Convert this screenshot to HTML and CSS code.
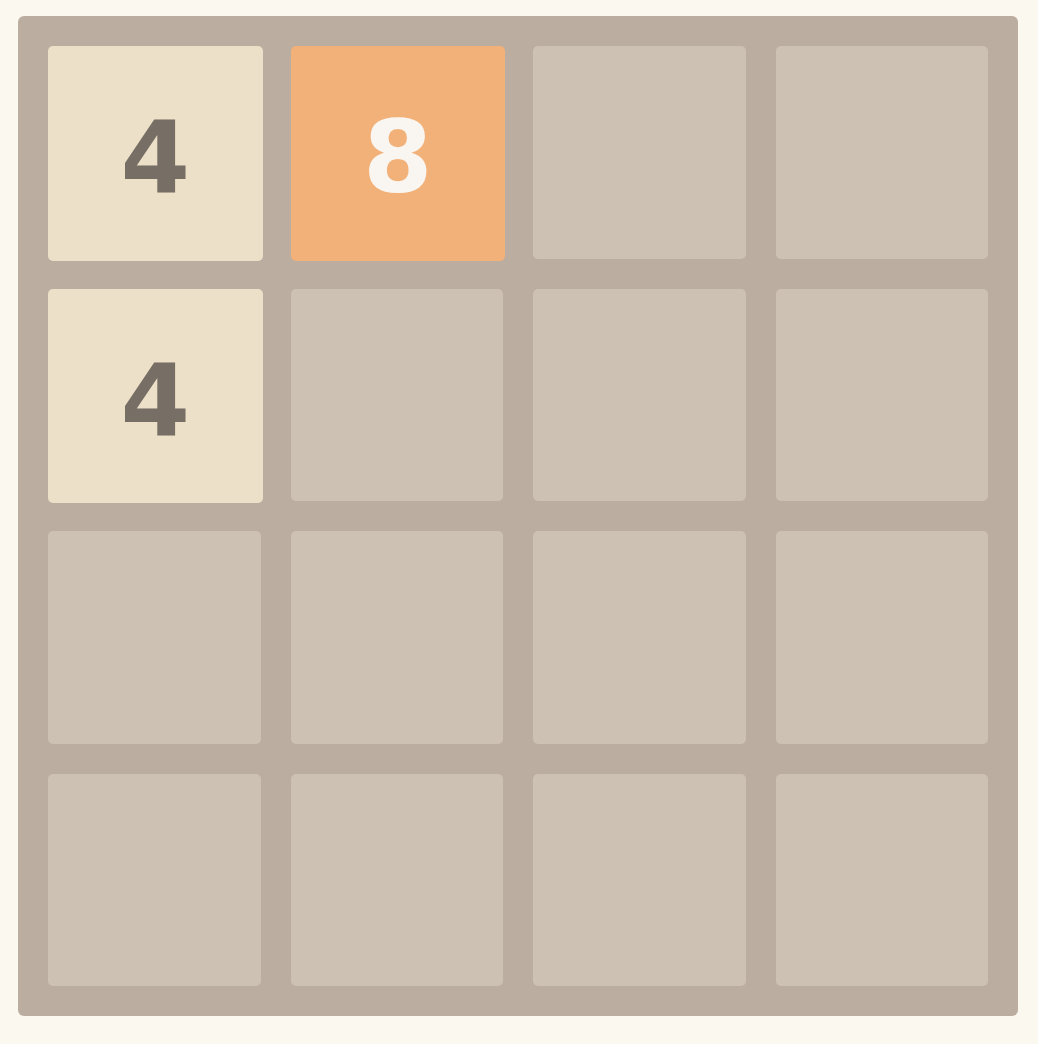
FILE: index.html
```html
<!DOCTYPE html>
<html lang="en">

<head>
    <meta charset="UTF-8">
    <meta name="viewport" content="width=device-width, initial-scale=1.0">
    <title>2048</title>
    <link rel="stylesheet" href="styles.css">
</head>

<body>
    <div class="game-container">
        <div class="grid">
            <div class="cell tile tile-4">4</div>
            <div class="cell tile tile-8">8</div>
            <div class="cell"></div>
            <div class="cell"></div>

            <div class="cell tile tile-4">4</div>
            <div class="cell"></div>
            <div class="cell"></div>
            <div class="cell"></div>

            <div class="cell"></div>
            <div class="cell"></div>
            <div class="cell"></div>
            <div class="cell"></div>

            <div class="cell"></div>
            <div class="cell"></div>
            <div class="cell"></div>
            <div class="cell"></div>
        </div>
    </div>
</body>

</html>
```

FILE: styles.css
```css
/* 2048 board */
body {
    margin: 0;
    padding: 16px 18px;
    background-color: #faf8ef;
    font-family: "DejaVu Sans", sans-serif;
}

.game-container {
    width: 1000px;
    height: 1000px;
    box-sizing: border-box;
    padding: 30px;
    background-color: #bbada0;
    border-radius: 6px;
}

.grid {
    display: grid;
    grid-template-columns: repeat(4, 1fr);
    grid-template-rows: repeat(4, 1fr);
    gap: 30px;
    height: 100%;
}

.cell {
    background-color: #cdc1b4;
    border-radius: 5px;
}

.tile {
    display: flex;
    justify-content: center;
    align-items: center;
    margin-right: -2px;
    margin-bottom: -2px;
    padding-top: 10px;
    font-size: 100px;
    font-weight: bold;
    line-height: 1;
}

.tile-4 {
    background-color: #ede0c8;
    color: #776e65;
}

.tile-8 {
    background-color: #f2b179;
    color: #f9f6f2;
}
```
